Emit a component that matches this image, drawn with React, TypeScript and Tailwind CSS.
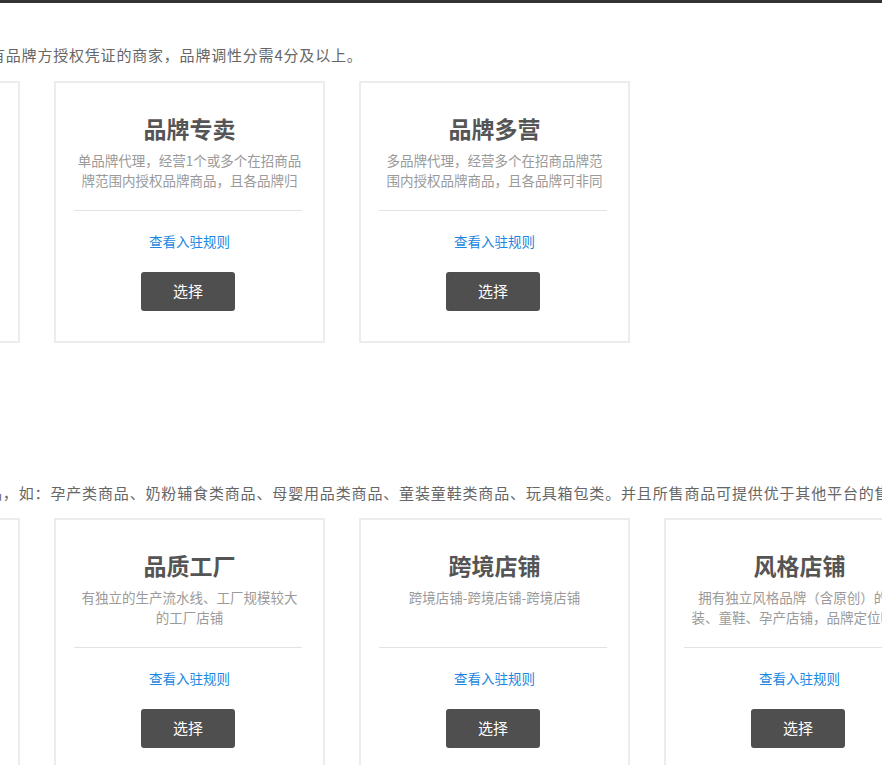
import React from "react";

type Shop = {
  title: string;
  desc: string;
};

const topRow: Shop[] = [
  { title: "品牌旗舰", desc: "经营1个自有品牌或持有一级独占授权的品牌旗舰店铺" },
  { title: "品牌专卖", desc: "单品牌代理，经营1个或多个在招商品牌范围内授权品牌商品，且各品牌归同一实际控制人" },
  { title: "品牌多营", desc: "多品牌代理，经营多个在招商品牌范围内授权品牌商品，且各品牌可非同一实际控制人" },
];

const bottomRow: Shop[] = [
  { title: "普通店铺", desc: "经营母婴类目商品的普通店铺" },
  { title: "品质工厂", desc: "有独立的生产流水线、工厂规模较大的工厂店铺" },
  { title: "跨境店铺", desc: "跨境店铺-跨境店铺-跨境店铺" },
  { title: "风格店铺", desc: "拥有独立风格品牌（含原创）的童装、童鞋、孕产店铺，品牌定位明确" },
];

const font = "font-['Noto_Sans_CJK_SC','Noto_Sans',sans-serif]";

const ShopCard = ({ shop }: { shop: Shop }) => (
  <div className="w-[271px] shrink-0 border-2 border-[#ececec] bg-white px-[18px] pt-[28px] pb-[30px] text-center">
    <h3 className="text-[23px] leading-[34px] font-bold text-[#555]">{shop.title}</h3>
    <p className="mt-[5px] h-[40px] overflow-hidden px-[2px] text-[13.5px] leading-[20px] text-[#9a9a9a]">
      {shop.desc}
    </p>
    <div className="mt-[20px] mr-[3px] h-px bg-[#e3e3e3]" />
    <a href="#" className="mt-[20px] block text-[13.5px] leading-[20px] text-[#1c87e0]">
      查看入驻规则
    </a>
    <button className="mt-[21px] ml-[67px] block h-[39px] w-[94px] rounded-[3px] bg-[#4f4f4f] text-[15px] text-white">
      选择
    </button>
  </div>
);

export default function App() {
  return (
    <div className={`h-[765px] w-[882px] overflow-hidden bg-white ${font}`}>
      <div className="h-[3px] bg-[#333]" />

      <p className="ml-[-10px] mt-[42px] whitespace-nowrap text-[15px] leading-[20px] tracking-[0.8px] text-[#666]">
        有品牌方授权凭证的商家，品牌调性分需4分及以上。
      </p>

      <div className="ml-[-251px] mt-[16px] flex gap-[34px]">
        {topRow.map((s) => (
          <ShopCard key={s.title} shop={s} />
        ))}
      </div>

      <p className="ml-[-13px] mt-[140px] whitespace-nowrap text-[15px] leading-[20px] tracking-[0.85px] text-[#666]">
        品，如：孕产类商品、奶粉辅食类商品、母婴用品类商品、童装童鞋类商品、玩具箱包类。并且所售商品可提供优于其他平台的售后服务。
      </p>

      <div className="ml-[-251px] mt-[15px] flex gap-[34px]">
        {bottomRow.map((s) => (
          <ShopCard key={s.title} shop={s} />
        ))}
      </div>
    </div>
  );
}
